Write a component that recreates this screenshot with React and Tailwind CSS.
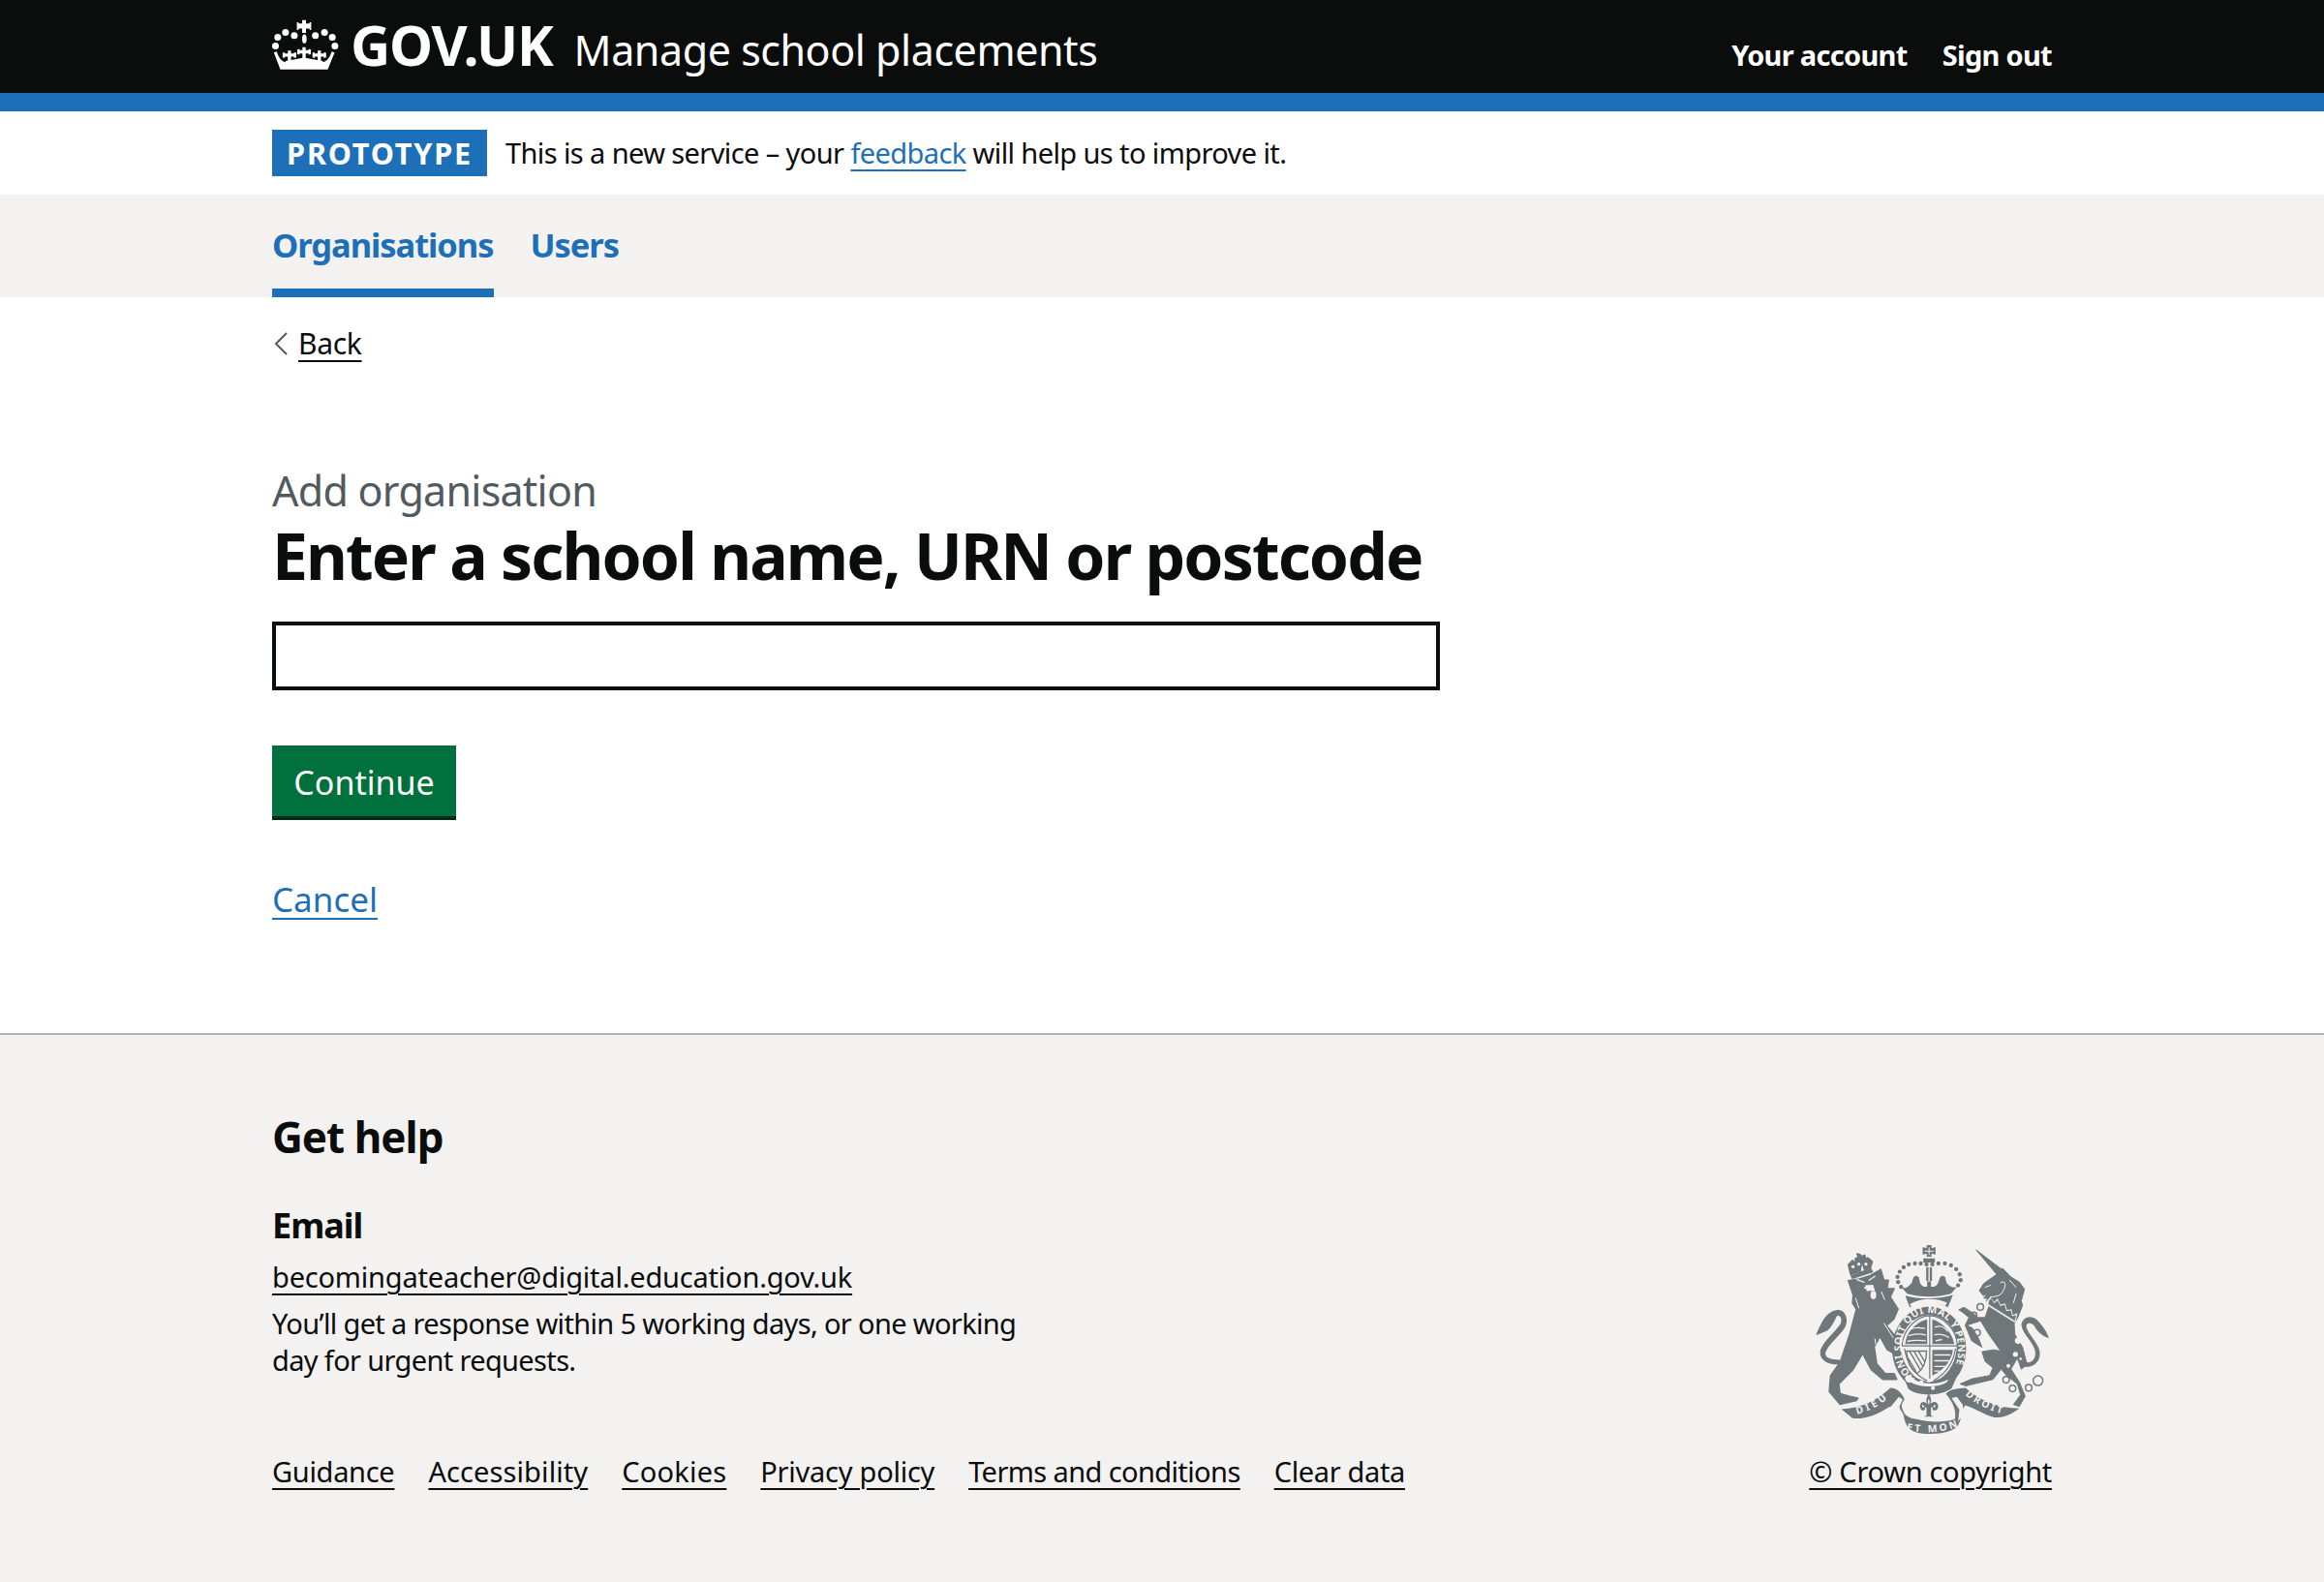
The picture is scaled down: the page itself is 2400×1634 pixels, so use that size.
function CrownLogo() {
  const dots = [[45, 110], [52, 83], [76, 68], [103, 78], [168, 78], [196, 68], [220, 83], [228, 110]];
  const fleurs = [[88, 124], [133, 114], [180, 124]];
  return (
    <svg viewBox="35 28 205 158" className="w-[69px] h-[53px] shrink-0" fill="#fff" aria-hidden="true">
      {dots.map(([cx, cy]) => <circle key={cx} cx={cx} cy={cy} r="10.5" />)}
      <path d="M127 30h12v11h11v-4h5v24h-5v-5h-11v14h-12V56h-11v5h-5V37h5v4h11z" />
      <ellipse cx="134" cy="88" rx="7" ry="14" />
      <path d="M40 130l9-3c6 18 14 30 27 33h115c13-3 21-15 27-33l9 3-21 52H60z" />
      <path d="M76 156q30-4 57-10 27 6 58 10v10H76z" />
      {fleurs.map(([x, y]) => (
        <path key={x} d={`M${x - 5} ${y}h10v9h9v-4l7 2v14l-7 2v-4h-9v24h-10v-24h-9v4l-7-2v-14l7-2v4h9z`} />
      ))}
    </svg>
  );
}

// coords are the reference crest at 3x, origin (1865,1280)
function Crest() {
  const c = '#6f777b';
  const bg = '#f3f2f1';
  const crownDots = [
    [128, 75], [110, 72], [92, 72], [73, 75], [57, 84], [45, 98], [38, 114], [40, 130], [49, 145],
    [146, 75], [165, 72], [185, 72], [204, 78], [220, 90], [231, 106], [234, 124], [226, 140],
  ];
  return (
    <svg viewBox="24 12 724 592" className="w-[241px] h-[197px]" aria-hidden="true">
      <defs>
        <path id="garterArc" d="M93 432C62 395 48 370 50 335 52 265 90 226 136 226S222 265 226 335C228 372 215 405 190 432" />
        <path id="ribbonL" d="M152 540C195 530 230 510 255 482" />
        <path id="ribbonC" d="M52 586C100 600 170 600 222 580" />
        <path id="ribbonR" d="M128 480C160 510 205 530 250 540" />
      </defs>

      {/* lion */}
      <g fill={c} stroke={c} strokeWidth="4" strokeLinejoin="round">
        <path d="M125 125L160 120 192 110 226 90 236 124 250 124 246 150 268 150 256 176 280 214 266 246 248 262 236 255 270 296 276 322 286 342 268 352 246 340 224 300 206 330 214 384 240 414 268 414 276 432 232 432 196 402 170 352 140 402 96 446 100 476 130 484 156 490 150 498 100 510 66 470 70 420 100 378 130 290 150 214 138 196 140 170z" />
        <path d="M28 292C45 250 62 218 96 218 118 222 124 250 112 272 98 296 60 320 52 350 52 368 70 372 100 374L98 384C62 384 38 372 40 346 44 314 92 284 104 258 110 240 100 230 90 232 82 244 76 264 60 278z" />
        <path d="M132 106L125 76 138 62 150 72 146 58 156 52 152 42 162 44 166 50 176 46 180 58 186 54 200 66 194 88z" />
        <path d="M134 110L196 90 200 98 138 118z" />
      </g>
      <g fill="none" stroke={bg} strokeLinecap="round">
        <path strokeWidth="4" d="M152 122l22 8M208 112l-18 12M176 148l20-4" />
        <path strokeWidth="3" d="M236 258l40 62M222 308l6 16M208 306l2 16M148 180l10 30M228 160l10 24" />
      </g>
      <ellipse cx="203" cy="170" rx="9" ry="13" fill={bg} />
      <path fill={bg} d="M178 140l24-2 6 18-26 2z" />
      <g fill={bg}>
        <circle cx="140" cy="82" r="5" /><circle cx="158" cy="74" r="5" /><circle cx="180" cy="74" r="5" />
        <path d="M168 76l6 18-10 2z" />
      </g>

      {/* unicorn */}
      <g transform="translate(360 0)">
        <g fill={c} stroke={c} strokeWidth="3" strokeLinejoin="round">
          <path d="M162 30L238 88 245 88 270 114 296 130 312 152 302 188 306 202 292 238 280 260 282 292 306 332 320 386 302 400 290 366 270 400 296 440 314 484 296 516 278 510 300 480 290 446 256 420 240 400 214 432 130 452 112 446 150 430 204 420 214 396 190 376 180 346 216 340 238 344 200 290 176 250 132 264 150 272 170 306 180 332 148 312 128 264 140 240 118 222 108 216 124 208 152 226 168 240 190 240 202 204 194 188 198 180 186 180 196 166 184 172 172 156 186 134 226 106z" />
          <path d="M302 376C330 390 352 372 346 342 338 312 306 290 304 262 306 240 330 234 348 246 364 262 378 280 386 302 366 296 352 282 344 266 332 252 318 254 316 268 320 290 352 316 358 346 362 382 330 400 300 388z" />
        </g>
        {/* collar and neck gap */}
        <path fill={bg} d="M194 190L206 176 218 192 228 180 238 200 252 196 258 216 272 214 276 232 290 226 284 256 276 250 196 200z" />
        <path fill={c} d="M202 188L208 180 218 196 228 186 238 204 250 200 256 220 270 218 274 236 286 232 282 250 200 198z" />
        <path fill="none" stroke={bg} strokeWidth="3" strokeLinecap="round" d="M198 202L278 252M238 132C256 120 258 146 238 168 230 174 216 176 206 176M190 146l16-6M266 124l20 22M286 166l-8 28" />
        <circle cx="292" cy="312" r="10" fill={bg} /><circle cx="284" cy="354" r="8" fill={bg} /><circle cx="262" cy="390" r="6" fill={bg} /><circle cx="300" cy="368" r="4" fill={bg} />
        <g fill="none" stroke={c} strokeWidth="4.5">
          <circle cx="175" cy="207" r="10" /><circle cx="155" cy="232" r="9" /><circle cx="165" cy="287" r="10" />
          <circle cx="255" cy="433" r="10" /><circle cx="275" cy="460" r="10" /><circle cx="325" cy="458" r="10" /><circle cx="354" cy="436" r="15" />
        </g>
      </g>

      {/* crown, garter, shield, motto */}
      <g transform="translate(240 0)">
        <g fill={c}>
          <path d="M129 15h14l1 10 9-3 3 0v22l-3 0-9-3-1 10h-14l-1-10-9 3-3 0V22l3 0 9 3z" />
          <path d="M118 56h36v13h-36zM127 84h7v42h-7zM138 84h7v42h-7z" />
          {crownDots.map(([cx, cy]) => <circle key={`${cx}-${cy}`} cx={cx} cy={cy} r="6.5" />)}
          <path d="M52 148C68 150 76 140 82 132L88 114 96 110 104 114 108 132C112 142 120 146 130 144V128H142V144C152 146 160 142 164 132L170 114 178 110 186 114 190 132C198 142 208 148 222 146L204 166C160 178 110 178 68 166z" />
          <path d="M62 172C105 184 165 184 210 170L194 208C160 188 110 188 76 208z" />
        </g>
        <path fill="none" stroke={bg} strokeWidth="3" d="M136 22v24M122 34h28" />
        <path fill={bg} d="M76 198C110 178 160 178 192 194L186 204C160 192 110 192 82 208z" />
        <ellipse cx="136" cy="338" rx="115" ry="132" fill={c} />
        <path fill={bg} d="M44 305 58 286C70 258 100 232 136 232 172 232 204 258 216 290L222 320C224 370 200 410 170 430L136 442 102 430C70 410 44 360 44 305z" />
        <path fill="none" stroke={c} strokeWidth="3.5" d="M52 328C54 282 92 236 138 234 184 236 224 282 224 328M52 328H224M138 234V430M60 336C66 380 92 420 130 436M218 336C212 380 190 412 150 436" />

        {/* quarters */}
        <path fill={c} d="M62 322C64 290 90 256 130 246V322z" />
        <path fill={c} d="M146 246C180 256 208 288 214 322H146z" />
        <path fill={c} d="M146 340H210C206 372 184 402 146 420z" />
        <g fill="none" stroke={bg} strokeWidth="4">
          <path d="M78 276c14-6 28-6 46-2M72 296c18-6 36-6 54-2M68 314c16-4 40-4 58-2M154 270c14-6 30-2 40 14M152 294c12-4 28-2 46 8M156 312l20-4M152 356h50M152 374h46M152 392h34M152 406h18" />
        </g>
        <path fill="none" stroke={c} strokeWidth="4" d="M66 344H128C128 376 116 402 98 414 80 402 68 376 66 344zM76 346l34 58M90 346l26 44M104 346l20 34M68 362l28 46" />

        <text fontFamily="'Noto Sans',sans-serif" fontWeight="700" fontSize="31" fill={bg}>
          <textPath href="#garterArc" textLength="470" lengthAdjust="spacing">HONI SOIT QUI MAL Y PENSE</textPath>
        </text>
        <path fill={c} d="M56 424C92 466 180 470 222 424L206 460C170 486 100 484 72 462z" />
        <path fill={bg} d="M62 424C66 416 80 416 86 428 104 446 160 452 196 432L190 442C160 460 104 456 78 440 70 446 60 436 62 424z" />
        <circle cx="112" cy="440" r="6" fill={bg} /><circle cx="148" cy="459" r="6" fill={bg} />

        {/* fleur */}
        <path fill={c} d="M135 476C128 488 124 498 132 510 122 498 112 500 108 512 106 524 116 532 124 526L122 520 128 518 128 544 120 548H150L142 544 142 518 148 520 146 526C156 532 166 524 164 512 160 500 148 498 138 510 146 498 142 488 135 476z" />
        <path fill={bg} d="M135 492C131 498 132 504 135 510 138 504 139 498 135 492zM116 510C112 516 116 522 122 516zM154 510C158 516 154 522 148 516z" />
      </g>

      {/* ribbons */}
      <path fill={c} d="M104 524C165 522 215 496 256 458 276 458 292 474 300 494 290 506 288 516 296 530 302 546 316 552 340 556 372 566 424 566 456 556 462 520 446 500 428 476 440 462 462 460 490 458 530 498 590 520 656 522 632 540 606 552 578 550 544 540 512 518 488 512 476 524 480 548 466 574 452 596 404 604 356 600 316 596 302 578 296 540 284 514 268 512 250 518 214 542 172 558 138 552z" />
      <path fill={bg} d="M256 518 282 486 294 494 284 516 290 544 272 530zM480 510 462 486 446 490 470 526 466 562 484 540z" />
      <g fontFamily="'Noto Sans',sans-serif" fontWeight="700" fontSize="31" fill={bg}>
        <text><textPath href="#ribbonL" textLength="106" lengthAdjust="spacing">DIEU</textPath></text>
        <text transform="translate(240 0)"><textPath href="#ribbonC" textLength="162" startOffset="14" lengthAdjust="spacing">ET MON</textPath></text>
        <text transform="translate(360 0)"><textPath href="#ribbonR" textLength="128" lengthAdjust="spacing">DROIT</textPath></text>
      </g>
    </svg>
  );
}

const footerLinks = [
  { label: 'Guidance', fit: 'tracking-[-0.3px]' },
  { label: 'Accessibility', fit: 'tracking-[0.1px]' },
  { label: 'Cookies', fit: 'tracking-[0.2px]' },
  { label: 'Privacy policy', fit: 'tracking-[-0.25px]' },
  { label: 'Terms and conditions', fit: 'tracking-[-0.6px]' },
  { label: 'Clear data', fit: 'tracking-[-0.35px]' },
];

export default function App() {
  const linkLine = 'underline decoration-2 underline-offset-[6px]';

  return (
    <div className="min-h-[1634px] flex flex-col bg-white text-[#0b0c0c] font-['Noto_Sans',sans-serif]">
      {/* Header */}
      <header className="bg-[#0b0c0c] border-b-[19px] border-[#1d70b8] text-white">
        <div className="mx-[281px] h-[96px] flex items-start justify-between">
          <div className="flex items-center h-[96px] pb-[3px]">
            <CrownLogo />
            <span className="ml-[12px] text-[57px] leading-none font-bold tracking-[-1.2px]">GOV.UK</span>
            <span className="ml-[22px] mt-[9px] text-[43px] leading-none tracking-[-0.45px]">Manage school placements</span>
          </div>
          <nav className="flex gap-[36px] pt-[37px] text-[29px] leading-[40px] font-bold tracking-[-0.7px]">
            <a>Your account</a>
            <a>Sign out</a>
          </nav>
        </div>
      </header>

      {/* Phase banner */}
      <div className="h-[86px] flex items-center px-[281px]">
        <strong className="bg-[#1d70b8] text-white h-[48px] w-[222px] pt-[1px] flex items-center justify-center text-[30.6px] font-bold tracking-[1.8px]">PROTOTYPE</strong>
        <p className="ml-[19px] text-[29px] leading-[40px] tracking-[-0.6px]">
          This is a new service – your <a className={`text-[#1d70b8] ${linkLine}`}>feedback</a> will help us to improve it.
        </p>
      </div>

      {/* Primary nav */}
      <nav className="h-[106px] bg-[#f3f2f1] px-[281px] flex gap-[38px] text-[34.5px] font-bold text-[#1d70b8] tracking-[-1.05px]">
        <a className="h-full border-b-[9px] border-[#1d70b8] pt-[29px] leading-[46px]">Organisations</a>
        <a className="pt-[29px] leading-[46px]">Users</a>
      </nav>

      {/* Main */}
      <main className="flex-1 px-[281px]">
        <a className="mt-[28px] flex items-center w-fit text-[30px] leading-[40px] tracking-[-0.3px]">
          <svg viewBox="0 0 14 24" className="w-[14px] h-[24px] mr-[11px] ml-[2px]" fill="none" stroke="#505a5f" strokeWidth="2"><path d="M13 1L2 12l11 11" /></svg>
          <span className={linkLine}>Back</span>
        </a>
        <p className="mt-[104px] text-[43px] leading-[56px] text-[#505a5f] tracking-[-0.75px]">Add organisation</p>
        <h1 className="mt-[-2px] text-[66px] leading-[80px] font-bold tracking-[-1.9px]">Enter a school name, URN or postcode</h1>
        <input className="block mt-[29px] w-[1206px] h-[71px] border-4 border-[#0b0c0c] bg-white" />
        <button className="block mt-[57px] w-[190px] h-[77px] pt-[2px] bg-[#00703c] border-b-4 border-[#002d18] text-white text-[34px] leading-none">Continue</button>
        <a className={`block mt-[59px] w-fit text-[35px] leading-[46px] text-[#1d70b8] ${linkLine}`}>Cancel</a>
      </main>

      {/* Footer */}
      <footer className="h-[567px] bg-[#f3f2f1] border-t-2 border-[#b1b4b6] px-[281px] flex items-end justify-between pb-[94px]">
        <div>
          <h2 className="text-[44px] leading-[56px] font-bold tracking-[-1px]">Get help</h2>
          <h3 className="mt-[41px] text-[36px] leading-[46px] font-bold tracking-[-1px]">Email</h3>
          <a className={`block mt-[10px] text-[29px] leading-[40px] tracking-[-0.2px] w-fit ${linkLine}`}>becomingateacher@digital.education.gov.uk</a>
          <p className="mt-[9px] w-[790px] text-[29px] leading-[38px] tracking-[-0.65px]">You’ll get a response within 5 working days, or one working day for urgent requests.</p>
          <ul className="mt-[76px] flex gap-[35px] text-[29px] leading-[40px]">
            {footerLinks.map(({ label, fit }) => (
              <li key={label}><a className={`${fit} ${linkLine}`}>{label}</a></li>
            ))}
          </ul>
        </div>
        <div className="flex flex-col items-end">
          <div className="mr-[3px] mb-[18px]"><Crest /></div>
          <a className={`text-[29px] leading-[40px] tracking-[-0.3px] ${linkLine}`}>© Crown copyright</a>
        </div>
      </footer>
    </div>
  );
}
